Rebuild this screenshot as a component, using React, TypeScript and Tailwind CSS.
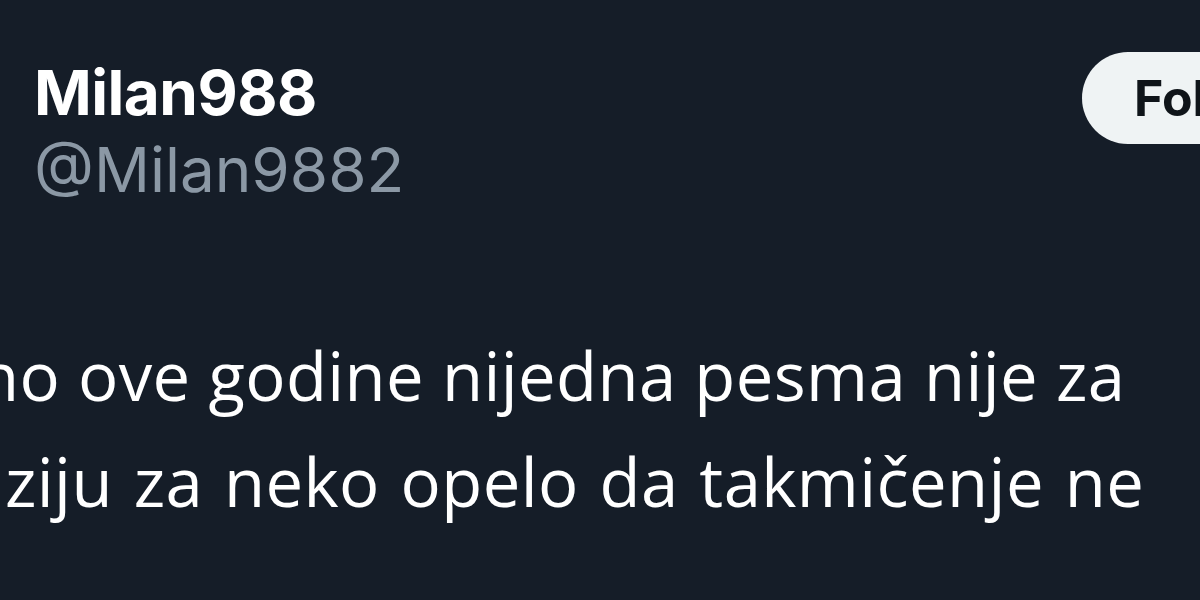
const App = () => {
    return (
        <div
            className="w-[1200px] h-[600px] overflow-hidden bg-[#151d28] text-white"
            style={{ fontFamily: "Inter, 'Noto Sans', sans-serif" }}>

            {/* header: user + follow */}
            <div className="flex items-start justify-between pt-[52px]">
                <div className="pl-[34px]">
                    <div className="pt-[3px] text-[62px] font-bold leading-[76px] tracking-[-0.5px]">
                        Milan988
                    </div>
                    <div className="text-[62px] leading-[77px] text-[#8b98a5]">
                        @Milan9882
                    </div>
                </div>

                <button className="mr-[-200px] h-[92px] w-[318px] rounded-full bg-[#eff3f4] pl-[52px] text-left text-[50px] font-bold text-[#0f1419]">
                    Follow
                </button>
            </div>

            {/* tweet body */}
            <div
                className="mt-[114px] text-[67px] leading-[106px] tracking-[0.4px] whitespace-nowrap"
                style={{ fontFamily: "'Open Sans', 'Noto Sans', sans-serif" }}>
                <p className="ml-[-22px]">no ove godine nijedna pesma nije za</p>
                <p className="ml-[5px] [word-spacing:3px]">ziju za neko opelo da takmičenje ne</p>
            </div>
        </div>
    )
}

export default App;
